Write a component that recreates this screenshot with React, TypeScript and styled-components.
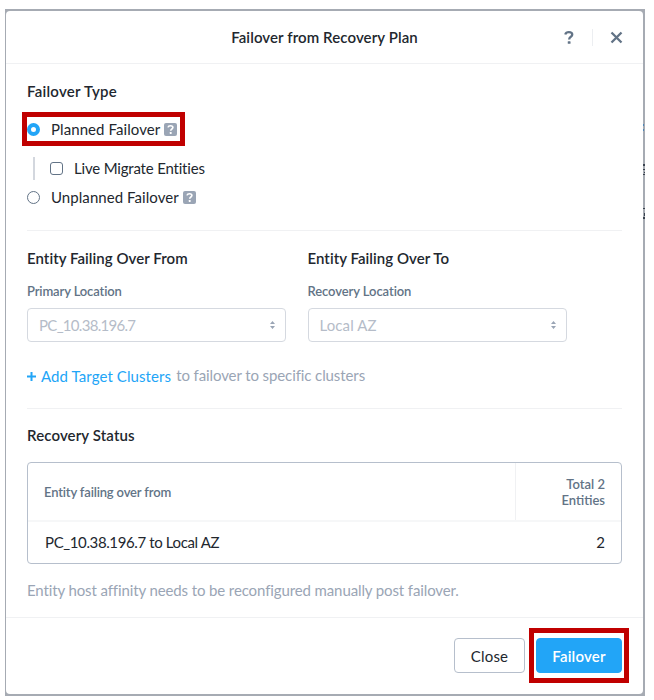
import React from "react";
import styled, { createGlobalStyle } from "styled-components";

const GlobalStyle = createGlobalStyle`
  * { box-sizing: border-box; }
  body {
    margin: 0;
    background: #fff;
    font-family: Lato, "Liberation Sans", sans-serif;
    font-size: 15px;
    color: #22272e;
  }
`;

const Page = styled.div`
  height: 700px;
  overflow: hidden;
  padding: 9px 9px 4px 5px;
`;

const Backdrop = styled.div`
  position: relative;
  width: 640px;
  height: 687px;
  padding: 2px 2px 2px 1px;
  background: #a6abb3;
`;

const EdgeMarks = styled.svg`
  position: absolute;
  top: 0;
  right: 0;
`;

const Dialog = styled.section`
  display: flex;
  flex-direction: column;
  height: 683px;
  background: #fff;
  border-radius: 4px;
`;

const Header = styled.header`
  display: grid;
  grid-template-columns: 1fr auto 1fr;
  align-items: center;
  height: 53px;
  border-bottom: 1px solid #f0f1f3;
`;

const Title = styled.h1`
  grid-column: 2;
  margin: 0;
  font-size: 15px;
  font-weight: 600;
  line-height: 20px;
  letter-spacing: 0.1px;
`;

const HeaderActions = styled.div`
  grid-column: 3;
  display: flex;
  justify-content: flex-end;
  align-items: center;
  padding-right: 20px;
`;

const IconButton = styled.button`
  display: flex;
  padding: 0;
  border: 0;
  background: none;
  color: #627386;
`;

const ActionDivider = styled.span`
  width: 1px;
  height: 17px;
  margin: 0 17px 0 18px;
  background: #eceef1;
`;

const Body = styled.div`
  display: flex;
  flex-direction: column;
  height: 553px;
  padding: 17px 21px 0;
`;

const Heading = styled.h2<{ $spacing?: number }>`
  margin: 0;
  font-size: 15px;
  font-weight: 600;
  line-height: 20px;
  letter-spacing: ${(p) => p.$spacing ?? 0.05}px;
  white-space: nowrap;
`;

const OptionRow = styled.label<{ $top: number }>`
  position: relative;
  display: flex;
  align-items: center;
  height: 20px;
  margin-top: ${(p) => p.$top}px;
`;

const OptionText = styled.span<{ $spacing: number }>`
  margin-left: 11px;
  letter-spacing: ${(p) => p.$spacing}px;
  line-height: 20px;
`;

const Radio = styled.span<{ $checked?: boolean }>`
  width: 13px;
  height: 13px;
  border-radius: 50%;
  border: ${(p) => (p.$checked ? "4px solid #22a5f7" : "1px solid #627386")};
  background: #fff;
`;

const Checkbox = styled.span`
  width: 13px;
  height: 13px;
  margin-left: 15px;
  border: 1px solid #627386;
  border-radius: 3px;
`;

const NestedBar = styled.span`
  width: 2px;
  height: 23px;
  margin-left: 6px;
  background: #d3d7de;
`;

const HelpBadge = styled.span`
  display: flex;
  width: 13px;
  height: 13px;
  margin-left: 4px;
  border-radius: 2px;
  background: #9aa5b5;
`;

const Highlight = styled.span<{ $box: [number, number, number, number] }>`
  position: absolute;
  left: ${(p) => p.$box[0]}px;
  top: ${(p) => p.$box[1]}px;
  width: ${(p) => p.$box[2]}px;
  height: ${(p) => p.$box[3]}px;
  border: 5px solid #c00000;
  pointer-events: none;
`;

const Divider = styled.hr<{ $top: number; $bottom: number }>`
  flex: none;
  width: 100%;
  height: 1px;
  margin: ${(p) => p.$top}px 0 ${(p) => p.$bottom}px;
  border: 0;
  background: #f0f1f3;
`;

const Locations = styled.div`
  display: grid;
  grid-template-columns: 259px 259px;
  gap: 21.5px;
`;

const FieldLabel = styled.div<{ $spacing: number }>`
  margin: 15px 0 9px;
  font-size: 13px;
  font-weight: 600;
  line-height: 16px;
  letter-spacing: ${(p) => p.$spacing}px;
  color: #627386;
`;

const Select = styled.div<{ $spacing: number }>`
  display: flex;
  justify-content: space-between;
  align-items: center;
  height: 34px;
  padding: 0 9px 0 11px;
  border: 1px solid #d5d9e0;
  border-radius: 4px;
  color: #b5bcc8;
  letter-spacing: ${(p) => p.$spacing}px;
`;

const TargetLine = styled.div`
  display: flex;
  align-items: center;
  height: 20px;
  margin-top: 24px;
  color: #9aa5b5;
`;

const AddLink = styled.a`
  display: flex;
  align-items: center;
  gap: 5px;
  color: #22a5f7;
  letter-spacing: 0.09px;
`;

const TargetHint = styled.span`
  padding-bottom: 2px;
  margin-left: 5px;
  letter-spacing: -0.1px;
`;

const StatusTable = styled.div`
  margin-top: 17px;
  border: 1px solid #b6bfcc;
  border-radius: 4px;
`;

const TableHead = styled.div`
  display: grid;
  grid-template-columns: 1fr 106px;
  height: 59px;
  border-bottom: 2px solid #f6f7f8;
  font-size: 13px;
  font-weight: 600;
  line-height: 16px;
  color: #627386;
`;

const HeadCell = styled.div`
  display: flex;
  align-items: center;
  padding-left: 16px;
  letter-spacing: -0.16px;
`;

const TotalCell = styled.div`
  display: flex;
  flex-direction: column;
  justify-content: center;
  align-items: flex-end;
  padding-right: 16px;
  border-left: 1px solid #f0f1f3;
`;

const TableRow = styled.div`
  display: flex;
  justify-content: space-between;
  align-items: center;
  height: 41px;
  padding: 0 16px 2px 17px;
`;

const RouteText = styled.span`
  letter-spacing: -0.38px;
`;

const Note = styled.p`
  margin: 16px 0 0;
  line-height: 20px;
  letter-spacing: -0.115px;
  white-space: nowrap;
  color: #9aa5b5;
`;

const Footer = styled.footer`
  display: flex;
  flex: 1;
  justify-content: flex-end;
  align-items: flex-start;
  gap: 11px;
  padding: 20px 21px 0;
  border-top: 1px solid #f0f1f3;
`;

const ButtonSlot = styled.div`
  position: relative;
`;

const Button = styled.button<{ $primary?: boolean }>`
  display: block;
  width: ${(p) => (p.$primary ? 86 : 71)}px;
  height: 35px;
  padding: 0;
  border: 1px solid ${(p) => (p.$primary ? "#22a5f7" : "#b6bfcc")};
  border-radius: 4px;
  background: ${(p) => (p.$primary ? "#22a5f7" : "#fff")};
  color: ${(p) => (p.$primary ? "#fff" : "#22272e")};
  font: ${(p) => (p.$primary ? 600 : 400)} 15px Lato, sans-serif;
  letter-spacing: 0.2px;
`;

const QuestionPath = () => (
  <>
    <path d="M1 3.5C1.5 1.9 2.8 1.2 4.6 1.2c2.1 0 3.4.9 3.4 2.5 0 2.2-3.1 2-3.1 4.7" fill="none" stroke="currentColor" strokeWidth="2.3" />
    <rect x="3.5" y="10.2" width="2.8" height="2.6" rx="0.6" fill="currentColor" />
  </>
);

const Help = () => (
  <HelpBadge>
    <svg width="13" height="13" viewBox="-4.6 -2.7 18.4 18.4" color="#fff">
      <QuestionPath />
    </svg>
  </HelpBadge>
);

const SortArrows = () => (
  <svg width="7" height="8" viewBox="0 0 7 8" fill="#9aa5b5">
    <path d="M1 3 3.5 0 6 3zM1 5 3.5 8 6 5z" />
  </svg>
);

export default function App() {
  return (
    <Page>
      <GlobalStyle />
      <Backdrop>
        <EdgeMarks width="2" height="220" viewBox="0 0 2 220">
          <path d="M0 115h1v2H0zM0 120h1v2H0z" fill="#4b86b8" />
          <path d="M0 155h2v2H0zM0 160h2v1H0zM1 163h1v1H1zM0 165h2v1H0zM0 199h2v1H0zM1 204h1v3H1zM0 208h2v2H0z" fill="#3a434f" />
        </EdgeMarks>
        <Dialog>
          <Header>
            <Title>Failover from Recovery Plan</Title>
            <HeaderActions>
              <IconButton aria-label="Help">
                <svg width="10" height="13" viewBox="0 0 9.5 13">
                  <QuestionPath />
                </svg>
              </IconButton>
              <ActionDivider />
              <IconButton aria-label="Close dialog">
                <svg width="13" height="13" viewBox="0 0 13 13">
                  <path d="M1.5 1.5l10 10M11.5 1.5l-10 10" stroke="currentColor" strokeWidth="2.3" />
                </svg>
              </IconButton>
            </HeaderActions>
          </Header>

          <Body>
            <Heading $spacing={0.25}>Failover Type</Heading>
            <OptionRow $top={18}>
              <Radio $checked />
              <OptionText $spacing={0.08}>Planned Failover</OptionText>
              <Help />
              <Highlight $box={[-5, -7, 163, 34]} />
            </OptionRow>
            <OptionRow $top={19}>
              <NestedBar />
              <Checkbox />
              <OptionText $spacing={-0.19}>Live Migrate Entities</OptionText>
            </OptionRow>
            <OptionRow $top={9}>
              <Radio />
              <OptionText $spacing={0.06}>Unplanned Failover</OptionText>
              <Help />
            </OptionRow>

            <Divider $top={23} $bottom={17} />

            <Locations>
              <div>
                <Heading>Entity Failing Over From</Heading>
                <FieldLabel $spacing={-0.13}>Primary Location</FieldLabel>
                <Select $spacing={-0.7}>
                  PC_10.38.196.7
                  <SortArrows />
                </Select>
              </div>
              <div>
                <Heading>Entity Failing Over To</Heading>
                <FieldLabel $spacing={-0.08}>Recovery Location</FieldLabel>
                <Select $spacing={0.1}>
                  Local AZ
                  <SortArrows />
                </Select>
              </div>
            </Locations>

            <TargetLine>
              <AddLink>
                <svg width="9" height="9" viewBox="0 0 9 9">
                  <path d="M4.5 0v9M0 4.5h9" stroke="currentColor" strokeWidth="2" />
                </svg>
                Add Target Clusters
              </AddLink>
              <TargetHint>to failover to specific clusters</TargetHint>
            </TargetLine>

            <Divider $top={22} $bottom={16} />

            <Heading $spacing={0.12}>Recovery Status</Heading>
            <StatusTable>
              <TableHead>
                <HeadCell>Entity failing over from</HeadCell>
                <TotalCell>
                  <span>Total 2</span>
                  <span>Entities</span>
                </TotalCell>
              </TableHead>
              <TableRow>
                <RouteText>PC_10.38.196.7 to Local AZ</RouteText>
                <span>2</span>
              </TableRow>
            </StatusTable>
            <Note>Entity host affinity needs to be reconfigured manually post failover.</Note>
          </Body>

          <Footer>
            <Button>Close</Button>
            <ButtonSlot>
              <Button $primary>Failover</Button>
              <Highlight $box={[-7, -10, 100, 55]} />
            </ButtonSlot>
          </Footer>
        </Dialog>
      </Backdrop>
    </Page>
  );
}
